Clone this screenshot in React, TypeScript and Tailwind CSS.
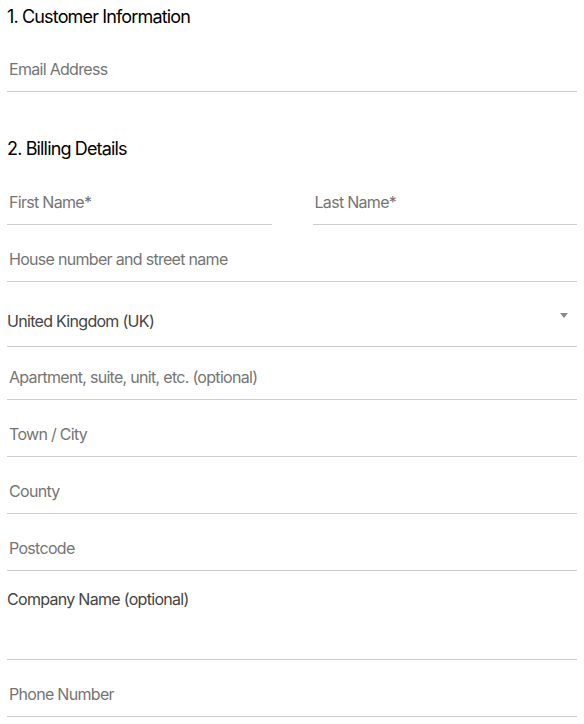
import React from "react";

const inputCls =
  "block w-full h-[44px] border-0 border-b border-[#cccccc] bg-transparent px-[2px] pb-[2px] text-[16px] tracking-[-0.7px] text-[#333333] placeholder:text-[#757575] outline-none";

function Field({ placeholder, className = "" }: { placeholder: string; className?: string }) {
  return <input type="text" placeholder={placeholder} className={`${inputCls} ${className}`} />;
}

export default function App() {
  return (
    <div className="min-h-screen bg-white px-[7px] font-['Inter',sans-serif]">
      {/* Customer */}
      <h3 className="pt-[5px] text-[18px] leading-[24px] tracking-[-0.85px] text-black">1. Customer Information</h3>
      <Field placeholder="Email Address" className="mt-[19px]" />

      {/* Billing */}
      <h3 className="mt-[45px] text-[18px] leading-[24px] tracking-[-0.85px] text-black">2. Billing Details</h3>
      <div className="mt-[20px] flex gap-[41px]">
        <Field placeholder="First Name*" />
        <Field placeholder="Last Name*" />
      </div>
      <Field placeholder="House number and street name" className="mt-[13px]" />

      <div className="relative mt-[13px]">
        <select
          defaultValue="GB"
          className="block h-[52px] w-full appearance-none border-0 border-b border-[#cccccc] bg-transparent text-[16px] tracking-[-0.7px] text-[#444444] outline-none"
        >
          <option value="GB">United Kingdom (UK)</option>
        </select>
        <span className="pointer-events-none absolute right-[9px] top-[18px] h-0 w-0 border-x-[4px] border-t-[5px] border-x-transparent border-t-[#888888]" />
      </div>

      <Field placeholder="Apartment, suite, unit, etc. (optional)" className="mt-[9px]" />
      <Field placeholder="Town / City" className="mt-[13px]" />
      <Field placeholder="County" className="mt-[13px]" />
      <Field placeholder="Postcode" className="mt-[13px]" />
      <textarea
        placeholder="Company Name (optional)"
        className="mt-[13px] block h-[76px] w-full resize-none border-0 border-b border-[#cccccc] bg-transparent pt-[3px] text-[16px] tracking-[-0.7px] text-[#333333] placeholder:text-[#444444] outline-none"
      />
      <Field placeholder="Phone Number" className="mt-[13px]" />
    </div>
  );
}
